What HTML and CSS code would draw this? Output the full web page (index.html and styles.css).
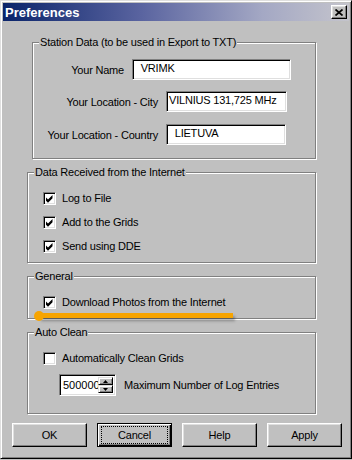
FILE: index.html
```html
<!DOCTYPE html>
<html>
<head>
<title>Preferences</title>
<meta charset="UTF-8">
<link rel="stylesheet" href="styles.css">
</head>
<body>

<div class="window">
  <div class="titlebar">
    <span class="title">Preferences</span>
    <div class="close">
      <svg width="8" height="7" viewBox="0 0 8 7"><path d="M0.5 0.5 L7.5 6.5 M7.5 0.5 L0.5 6.5" stroke="#000" stroke-width="1.7"/></svg>
    </div>
  </div>

  <div class="client">
    <div class="group group-station">
      <div class="legend">Station Data (to be used in Export to TXT)</div>
      <div class="field-row row-name">
        <span class="field-label">Your Name</span>
        <div class="textbox tb-name">  VRIMK</div>
      </div>
      <div class="field-row row-city">
        <span class="field-label">Your Location - City</span>
        <div class="textbox tb-city">VILNIUS 131,725 MHz</div>
      </div>
      <div class="field-row row-country">
        <span class="field-label">Your Location - Country</span>
        <div class="textbox tb-country">  LIETUVA</div>
      </div>
    </div>

    <div class="group group-data">
      <div class="legend">Data Received from the Internet</div>
      <div class="rows">
        <div class="check-row"><span class="checkbox checked"></span>Log to File</div>
        <div class="check-row"><span class="checkbox checked"></span>Add to the Grids</div>
        <div class="check-row"><span class="checkbox checked"></span>Send using DDE</div>
      </div>
    </div>

    <div class="group group-general">
      <div class="legend">General</div>
      <div class="rows">
        <div class="check-row"><span class="checkbox checked"></span>Download Photos from the Internet</div>
      </div>
    </div>

    <div class="group group-auto">
      <div class="legend">Auto Clean</div>
      <div class="rows">
        <div class="check-row"><span class="checkbox"></span>Automatically Clean Grids</div>
        <div class="spin-row">
          <div class="spinbox">
            <span class="spin-value">500000</span>
            <div class="spin-buttons">
              <span class="spin-btn"><svg width="5" height="3" viewBox="0 0 5 3"><path d="M2.5 0 L5 3 L0 3 Z" fill="#000"/></svg></span>
              <span class="spin-btn"><svg width="5" height="3" viewBox="0 0 5 3"><path d="M0 0 L5 0 L2.5 3 Z" fill="#000"/></svg></span>
            </div>
          </div>
          <span class="spin-label">Maximum Number of Log Entries</span>
        </div>
      </div>
    </div>

    <div class="buttons">
      <div class="btn">OK</div>
      <div class="btn btn-default"><span class="focus">Cancel</span></div>
      <div class="btn">Help</div>
      <div class="btn">Apply</div>
    </div>
  </div>

  <!-- orange annotation drawn over the dialog -->
  <div class="marker"><span class="marker-dot"></span></div>
</div>

</body>
</html>
```

FILE: styles.css
```css
body {
  margin: 0;
  font-family: "Liberation Sans", Arial, sans-serif;
  font-size: 11px;
  letter-spacing: -0.2px;
  color: #000;
  background: #c0c0c0;
}

.window {
  position: relative;
  box-sizing: border-box;
  width: 352px;
  height: 459px;
  padding: 2px;
  background: #c0c0c0;
  border: 1px solid;
  border-color: #dfdfdf #000 #000 #dfdfdf;
  box-shadow: inset 1px 1px #fff, inset -1px -1px #808080;
}

/* title bar */
.titlebar {
  display: flex;
  align-items: center;
  justify-content: space-between;
  height: 18px;
  padding: 0 2px 0 2px;
  background: linear-gradient(to right, #0a246a, #5a64a0 40%, #a4a8c4 75%, #c4c4cc);
}

.title {
  color: #fff;
  font-weight: bold;
  font-size: 13px;
  letter-spacing: 0;
}

.close {
  box-sizing: border-box;
  width: 16px;
  height: 14px;
  display: flex;
  align-items: center;
  justify-content: center;
  background: #c0c0c0;
  border: 1px solid;
  border-color: #fff #000 #000 #fff;
  box-shadow: inset -1px -1px #808080, inset 1px 1px #dfdfdf;
}

/* group boxes */
.group {
  box-sizing: border-box;
  margin-top: 13px;
  margin-left: 24px;
  width: 289px;
  border: 1px solid #808080;
  box-shadow: inset 1px 1px #fff, 1px 1px #fff;
}

.group-station { margin-top: 21px; margin-left: 29px; width: 284px; height: 117px; }
.group-data { height: 91px; }
.group-general { height: 43px; }
.group-auto { height: 82px; }

.legend {
  width: fit-content;
  margin: -7px 0 0 6px;
  padding: 0 1px;
  line-height: 13px;
  background: #c0c0c0;
  white-space: nowrap;
}

/* station fields */
.field-row {
  display: flex;
  align-items: center;
  gap: 8px;
  height: 21px;
  margin-top: 11px;
}

.row-name { margin-top: 10px; }
.row-country { margin-top: 12px; }

.field-label {
  flex: 0 0 125px;
  text-align: right;
  white-space: nowrap;
}

.row-name .field-label { flex-basis: 91px; }

.textbox {
  box-sizing: border-box;
  height: 21px;
  padding: 0 2px;
  line-height: 17px;
  background: #fff;
  white-space: pre;
  overflow: hidden;
  border: 1px solid;
  border-color: #808080 #fff #fff #808080;
  box-shadow: inset 1px 1px #000, inset -1px -1px #dfdfdf;
}

.tb-name { width: 159px; }
.tb-city { width: 121px; }
.tb-country { width: 120px; }

/* checkboxes */
.rows {
  margin-top: 7px;
}

.check-row {
  display: flex;
  align-items: center;
  gap: 6px;
  height: 24px;
  padding-left: 15px;
}

.checkbox {
  box-sizing: border-box;
  width: 13px;
  height: 13px;
  flex: none;
  background: #fff;
  border: 1px solid;
  border-color: #808080 #fff #fff #808080;
  box-shadow: inset 1px 1px #000, inset -1px -1px #dfdfdf;
}

.checkbox.checked {
  background: #fff url("data:image/svg+xml,%3Csvg xmlns='http://www.w3.org/2000/svg' width='11' height='11' viewBox='0 0 11 11'%3E%3Cpath d='M2 4.5 L4 6.5 L8.5 2 L8.5 5.2 L4 9.7 L2 7.7 Z' fill='%23000'/%3E%3C/svg%3E") no-repeat 0 0;
}

/* spin box */
.spin-row {
  display: flex;
  align-items: center;
  gap: 8px;
  margin-top: 4px;
  padding-left: 31px;
}

.spinbox {
  box-sizing: border-box;
  display: flex;
  width: 57px;
  height: 22px;
  padding: 2px 2px 2px 2px;
  background: #fff;
  border: 1px solid;
  border-color: #808080 #fff #fff #808080;
  box-shadow: inset 1px 1px #000, inset -1px -1px #dfdfdf;
}

.spin-value {
  flex: 1;
  overflow: hidden;
  white-space: nowrap;
  line-height: 16px;
  letter-spacing: 0;
  padding-left: 1px;
}

.spin-buttons {
  display: flex;
  flex-direction: column;
  width: 15px;
}

.spin-btn {
  box-sizing: border-box;
  flex: 1;
  display: flex;
  align-items: center;
  justify-content: center;
  background: #c0c0c0;
  border: 1px solid;
  border-color: #dfdfdf #000 #000 #dfdfdf;
  box-shadow: inset 1px 1px #fff, inset -1px -1px #808080;
}

.spin-label {
  white-space: nowrap;
}

/* dialog buttons */
.buttons {
  display: flex;
  gap: 10px;
  margin: 9px 0 0 9px;
}

.btn {
  box-sizing: border-box;
  width: 75px;
  height: 24px;
  display: flex;
  align-items: center;
  justify-content: center;
  background: #c0c0c0;
  border: 1px solid;
  border-color: #fff #000 #000 #fff;
  box-shadow: inset -1px -1px #808080, inset 1px 1px #dfdfdf;
}

.btn-default {
  border-color: #000;
  box-shadow: inset 1px 1px #fff, inset -1px -1px #000, inset -2px -2px #808080;
}

.focus {
  align-self: stretch;
  flex: 1;
  display: flex;
  align-items: center;
  justify-content: center;
  margin: 2px 3px;
  border: 1px dotted #000;
}

/* orange highlight */
.marker {
  position: absolute;
  left: 38px;
  top: 312px;
  width: 194px;
  height: 5px;
  background: #f7a400;
  box-shadow: 2px 3px 3px rgba(0, 0, 0, 0.3);
}

.marker-dot {
  position: absolute;
  left: -5px;
  top: -2px;
  width: 10px;
  height: 10px;
  border-radius: 50%;
  background: #f7a400;
}
```
